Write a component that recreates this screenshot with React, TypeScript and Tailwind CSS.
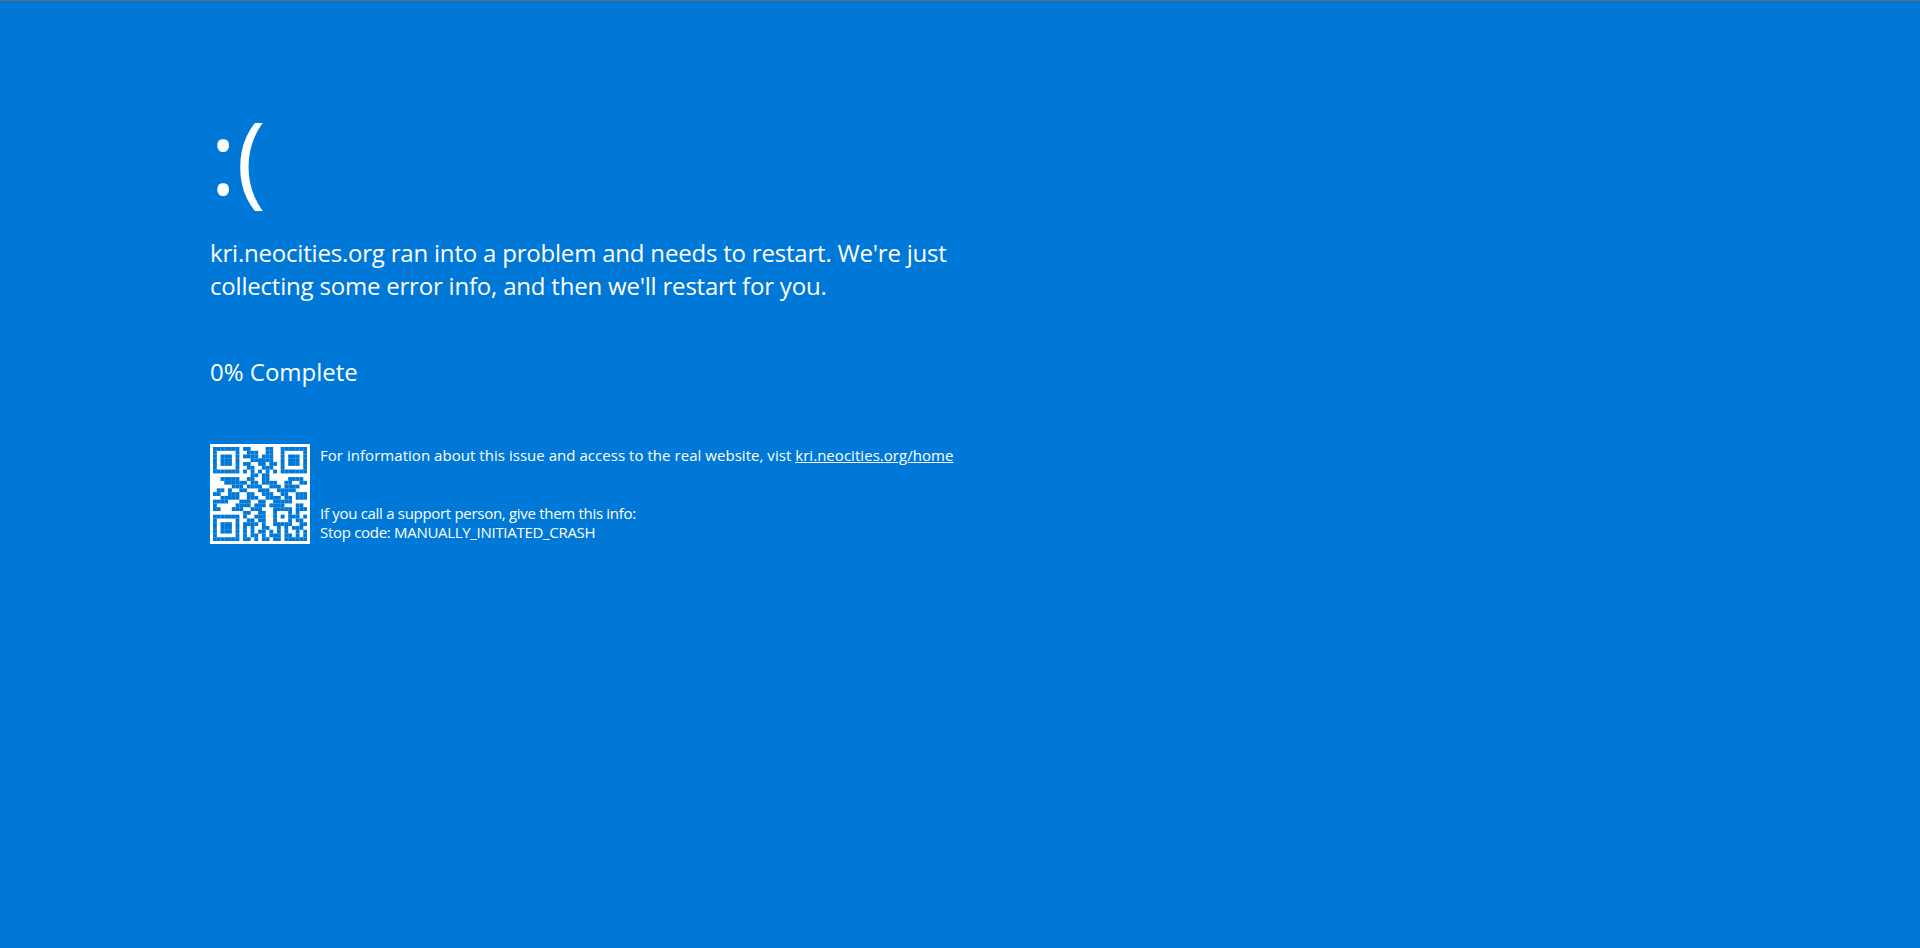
const QR = [
  "1111111011000011001111111",
  "1000001001110011001000001",
  "1011101011110111001011101",
  "1011101000111111001011101",
  "1011101011001101101011101",
  "1000001001100111001000001",
  "1111111010101010101111111",
  "0000000000110110000000000",
  "0011111001100110000011110",
  "0001111110110111100110011",
  "0000011101111001110111100",
  "0110100110001110011111000",
  "1100111001100111001100111",
  "0011111001110011110110111",
  "1111000111001100111110000",
  "1000001111011101111000110",
  "1100011100111000111110111",
  "0000000011001100100010100",
  "1111111010011100101011101",
  "1000001001101100100010110",
  "1011101011110100111110011",
  "1011101010100110010101110",
  "1011101010101101010100101",
  "1000001010110101110110101",
  "1111111011010110110111111",
];

function QrCode() {
  return (
    <div className="flex h-[100px] w-[100px] shrink-0 items-center justify-center bg-white">
      <svg width="94" height="94" viewBox="0 0 25 25">
        {QR.map((row, y) =>
          row.split("").map((cell, x) =>
            cell === "1" ? <rect key={`${x}-${y}`} x={x} y={y} width="1.02" height="1.02" fill="#0078d7" /> : null
          )
        )}
      </svg>
    </div>
  );
}

export default function App() {
  return (
    <div className="min-h-[948px] border-t border-[#6b6b6b] bg-[#0078d7] pl-[210px] pt-[95px] font-['Open_Sans',sans-serif] text-white">
      <div className="text-[100px] leading-[120px]">:(</div>
      <p className="mt-[20px] w-[760px] text-[24px] leading-[33px] tracking-[-0.2px]">
        kri.neocities.org ran into a problem and needs to restart. We're just collecting some error info, and then we'll restart for you.
      </p>
      <p className="mt-[53px] text-[24px] leading-[33px]">0% Complete</p>
      <div className="mt-[56px] flex gap-[10px]">
        <QrCode />
        <div className="pt-[2px] text-[15px] leading-[19px]">
          <p className="tracking-[0.04px]">
            For information about this issue and access to the real website, vist{" "}
            <a className="underline" href="#home">kri.neocities.org/home</a>
          </p>
          <p className="mt-[38px] leading-[20px] tracking-[-0.3px]">If you call a support person, give them this info:</p>
          <p className="tracking-[-0.3px]">Stop code: MANUALLY_INITIATED_CRASH</p>
        </div>
      </div>
    </div>
  );
}
